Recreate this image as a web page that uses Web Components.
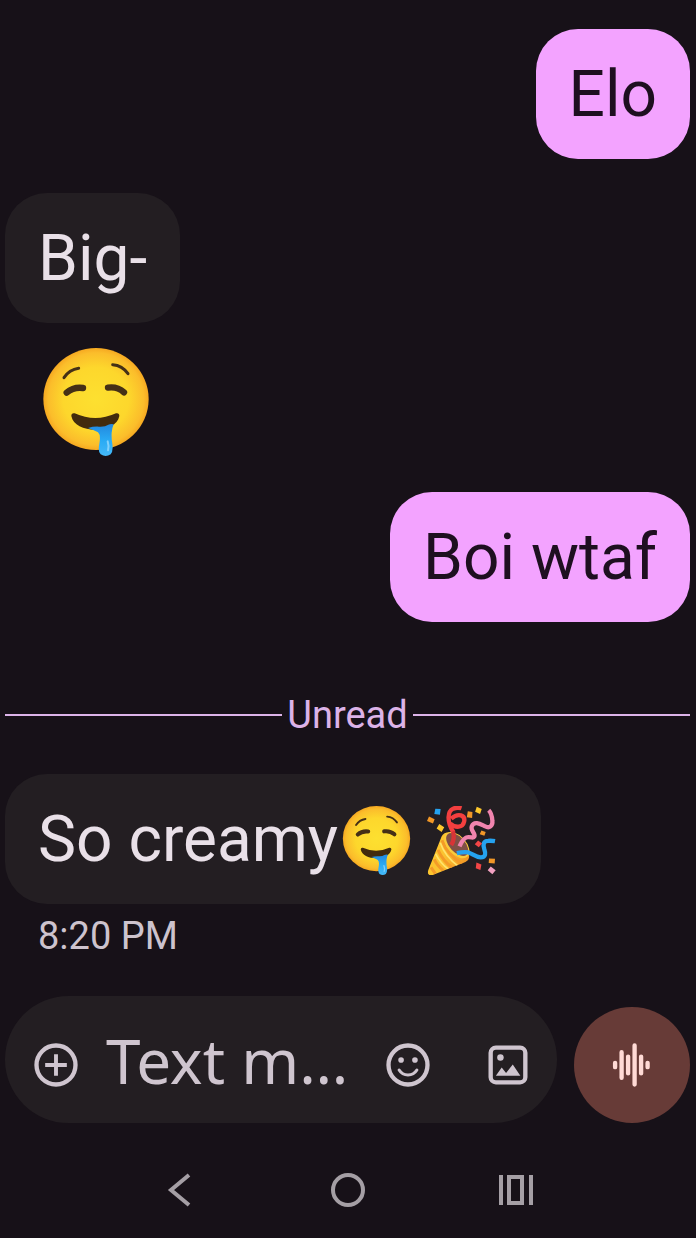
<!DOCTYPE html>
<html lang="en">
<head>
<meta charset="utf-8">
<meta name="viewport" content="width=device-width, initial-scale=1">
<title>Messages</title>
<style>
	html {
		background: #171118;
	}

	body {
		margin: 0;
		font-family: Roboto, "Liberation Sans", sans-serif;
	}
</style>
</head>
<body>
<chat-screen>
	<chat-message sent>Elo</chat-message>
	<chat-message>Big-</chat-message>
	<chat-message bare><chat-emoji name="drool"></chat-emoji></chat-message>
	<chat-message sent>Boi wtaf</chat-message>
	<chat-divider>Unread</chat-divider>
	<chat-message time="8:20 PM">So creamy<chat-emoji name="drool"></chat-emoji><chat-emoji name="party"></chat-emoji></chat-message>
	<chat-composer slot="footer"></chat-composer>
	<system-nav slot="footer"></system-nav>
</chat-screen>

<script>
/**
 * Dummy HTML tag function for syntax highlighters.
 * @returns {string} The original raw string.
 */
const html = x => x.raw[0];

/**
 * @param {string} name
 * @param {string} markup
 * @param {(shadow: ShadowRoot, host: HTMLElement) => void} [setup]
 */
function define(name, markup, setup) {
	const template = document.createElement("template");
	template.innerHTML = markup;

	customElements.define(name, class extends HTMLElement {
		constructor() {
			super();
			const shadow = this.attachShadow({mode: "open"});
			shadow.appendChild(template.content.cloneNode(true));
			if (setup)
				setup(shadow, this);
		}
	});
}

define("chat-screen", html`
	<style>
		:host {
			display: flex;
			flex-direction: column;
			min-height: 100vh;
			box-sizing: border-box;
			padding: 29px 6px 0 5px;
		}

		main {
			display: flex;
			flex-direction: column;
			flex: 1;
			gap: 34px;
		}
	</style>
	<main><slot></slot></main>
	<footer><slot name="footer"></slot></footer>
`);

define("chat-message", html`
	<style>
		:host {
			display: flex;
			flex-direction: column;
			align-items: flex-start;
		}

		:host([sent]) {
			align-items: flex-end;
		}

		.bubble {
			display: flex;
			align-items: center;
			padding: 26px 33px 24px;
			border-radius: 42px;
			background: #231e22;
			color: #e9e0e8;
			font-size: 64px;
			line-height: 80px;
		}

		:host([sent]) .bubble {
			background: #f3a3ff;
			color: #1e0f20;
		}

		:host([bare]) .bubble {
			--emoji-size: 108px;
			background: none;
			padding-block: 0 2px;
		}

		:host([bare]) {
			margin-top: -9px;
		}

		time {
			padding: 9px 33px 0;
			color: #cdc3cd;
			font-size: 38px;
			line-height: 46px;
		}
	</style>
	<div class="bubble"><slot></slot></div>
`, (shadow, host) => {
	if (!host.hasAttribute("time"))
		return;

	const time = document.createElement("time");
	time.textContent = host.getAttribute("time");
	shadow.appendChild(time);
});

define("chat-divider", html`
	<style>
		:host {
			display: flex;
			align-items: center;
			gap: 5px;
			padding-top: 34px;
			color: #dcb3e8;
			font-size: 38px;
			line-height: 50px;
		}

		:host::before,
		:host::after {
			content: "";
			flex: 1;
			height: 2px;
			background: currentColor;
		}
	</style>
	<slot></slot>
`);

const emoji = {
	drool: html`
		<svg viewBox="125 504 324 324" role="img" aria-label="Drooling face">
			<defs>
				<radialGradient id="skin" cx=".5" cy=".5" r=".52">
					<stop offset="0" stop-color="#fde030"/>
					<stop offset=".6" stop-color="#fdd72c"/>
					<stop offset=".87" stop-color="#fbbd2b"/>
					<stop offset="1" stop-color="#f4a01d"/>
				</radialGradient>
				<linearGradient id="drop" x2="0" y2="1">
					<stop offset="0" stop-color="#2388dd"/>
					<stop offset=".5" stop-color="#29aaf4"/>
					<stop offset="1" stop-color="#45b9f8"/>
				</linearGradient>
			</defs>
			<ellipse cx="287" cy="657" rx="158" ry="153" fill="url(#skin)"/>
			<g fill="none" stroke="#453016" stroke-linecap="round">
				<path d="M191 593q16-24 44-28M337 554q29 2 46 27" stroke-width="9"/>
				<path d="M199 638q21-18 49-14M323 623q28-4 48 14" stroke-width="19"/>
			</g>
			<path d="M213 708q0-10 10-8 62 28 124 0 10-2 10 8c-5 27-37 41-72 41s-67-14-72-41z" fill="#422b0d"/>
			<path d="M263 744q17-5 33-4 19 1 28-6 8-3 16-1-5 12-6 25-1 18 2 34 3 22-5 31-15 10-30 0-9-8-4-32 5-26-4-34-14-8-30-13z" fill="url(#drop)"/>
			<path d="M322 784q5 15 1 27" fill="none" stroke="#83d1fb" stroke-width="6" stroke-linecap="round"/>
		</svg>
	`,
	party: html`
		<svg viewBox="293 73 208 208" role="img" aria-label="Party popper">
			<defs>
				<linearGradient id="cone" x2="1" y2=".35">
					<stop offset="0" stop-color="#ffc928"/>
					<stop offset=".5" stop-color="#fbc331"/>
					<stop offset="1" stop-color="#f19725"/>
				</linearGradient>
				<clipPath id="cone-edge">
					<path d="M297 278q-3-3 0-12l40-101q6-14 27-13 60 26 56 76-1 9-11 14l-93 37q-15 6-19-1z"/>
				</clipPath>
			</defs>
			<g clip-path="url(#cone-edge)">
				<path d="M290 140h140v150h-140z" fill="url(#cone)"/>
				<path d="M338 176q14 42 63 72M326 205q15 34 44 54M315 234q9 20 27 33M305 258l13 19" fill="none" stroke="#f49b27" stroke-width="9"/>
				<path d="M333 184q14 42 56 72M319 217q15 29 38 46" fill="none" stroke="#ffe36c" stroke-width="5"/>
			</g>
			<ellipse cx="383" cy="191" rx="28" ry="47" fill="#f9cb3b" transform="rotate(-43 383 191)"/>
			<ellipse cx="384" cy="189" rx="23" ry="42" fill="#805046" transform="rotate(-43 384 189)"/>
			<g fill="none" stroke-width="13" stroke-linejoin="round">
				<path d="M366 191q12-18 5-45" stroke="#d83436"/>
				<path d="M371 150c-19-33-16-61 1-69 10-4 19-3 25-1M366 111c22-19 43-10 39 9-4 18-25 21-42 6" stroke="#f33f3f"/>
				<path d="M391 195c8-18 15-28 25-28 12-1 17 5 20-2 4-9-13-18-8-31 7-18 27-6 40 0 13 8 24-1 22-17-1-13-4-24-11-31" stroke="#f084ae"/>
				<path d="M383 215q22-5 35-2c13 4 21 14 37 15 16 0 15-13 11-24-5-15-3-26 11-26q10-1 21 1" stroke="#25a2ef"/>
			</g>
			<path d="M318 81l16 1-2 17-17-2z" fill="#25a2ef"/>
			<path d="M299 105l17 8-5 13-18-8zM416 89l14 2-1 18-16-2zM457 147l13 4-4 12-14-5zM480 231l18 1-1 14-18-1z" fill="#f19727"/>
			<path d="M330 127l15 10-8 14-15-10zM443 75l15 7-5 15-15-7z" fill="#fdc72c"/>
			<path d="M447 177l12 9-10 11-12-9zM442 243l15 6-3 17-14-5z" fill="#f34546"/>
			<path d="M485 255l15 12-10 12-14-12z" fill="#f2a1c1"/>
		</svg>
	`,
};

define("chat-emoji", html`
	<style>
		:host {
			display: flex;
			margin: 0 12px 0 4px;
		}

		svg {
			width: var(--emoji-size, 69px);
			height: var(--emoji-size, 69px);
		}
	</style>
`, (shadow, host) => {
	shadow.innerHTML += emoji[host.getAttribute("name")];
});

define("chat-composer", html`
	<style>
		:host {
			display: flex;
			align-items: flex-end;
			gap: 17px;
			color: #cfc5cf;
		}

		.field {
			display: flex;
			align-items: center;
			flex: 1;
			min-width: 0;
			box-sizing: border-box;
			height: 127px;
			padding: 10px 23px 0 25px;
			border-radius: 64px;
			background: #231e22;
		}

		input {
			flex: 1;
			min-width: 0;
			height: 84px;
			margin: 0 24px;
			padding: 0 0 10px;
			border: 0;
			outline: 0;
			background: none;
			color: inherit;
			font: 62px "Noto Sans", "Open Sans", sans-serif;
			text-overflow: ellipsis;
		}

		input::placeholder {
			color: inherit;
			opacity: 1;
		}

		button {
			display: flex;
			padding: 0;
			border: 0;
			background: none;
			color: inherit;
		}

		svg {
			width: 52px;
			height: 52px;
			fill: none;
			stroke: currentColor;
			stroke-width: 2;
		}

		.gallery {
			margin-left: 48px;
		}

		.voice {
			align-items: center;
			justify-content: center;
			width: 116px;
			height: 116px;
			border-radius: 50%;
			background: #673b37;
			color: #ffdad5;
		}
	</style>
	<div class="field">
		<button aria-label="Add attachment">
			<svg viewBox="0 0 24 24"><circle cx="12" cy="12" r="9"/><path d="M12 7v10M7 12h10" stroke-width="1.8"/></svg>
		</button>
		<input type="text" aria-label="Text message" placeholder="Text m…">
		<button aria-label="Emoji">
			<svg viewBox="0 0 24 24">
				<circle cx="12" cy="12" r="9"/>
				<g fill="currentColor" stroke="none"><circle cx="8.8" cy="9.7" r="1.3"/><circle cx="15.2" cy="9.7" r="1.3"/></g>
				<path d="M7.9 14.3q1.4 2.3 4.1 2.3t4.1-2.3" stroke-width="1.4" stroke-linecap="round"/>
			</svg>
		</button>
		<button class="gallery" aria-label="Gallery">
			<svg viewBox="0 0 24 24">
				<rect x="4" y="4" width="16" height="16" rx="2.4"/>
				<g fill="currentColor" stroke="none"><circle cx="8.5" cy="8.5" r="1.5"/><path d="M6.4 17l2.7-3.8 2 2.5 3.1-3.9L17.7 17z"/></g>
			</svg>
		</button>
	</div>
	<button class="voice" aria-label="Record voice message">
		<svg viewBox="0 0 24 24"><path d="M4.2 11v2M7.2 6.1v11.8M10.2 8.1v7.8M13.2 3v18M16.2 8.1v7.8M19.2 11v2" stroke-linecap="round"/></svg>
	</button>
`);

define("system-nav", html`
	<style>
		:host {
			display: grid;
			grid-template-columns: repeat(3, 168px);
			justify-content: center;
			padding: 43px 0 24px;
			color: #a59fa5;
		}

		button {
			display: flex;
			justify-content: center;
			padding: 0;
			border: 0;
			background: none;
			color: inherit;
		}

		svg {
			width: 48px;
			height: 48px;
			fill: none;
			stroke: currentColor;
			stroke-width: 4;
		}
	</style>
	<button aria-label="Back"><svg viewBox="0 0 48 48"><path d="M33 9L15 24l18 15"/></svg></button>
	<button aria-label="Home"><svg viewBox="0 0 48 48"><circle cx="24" cy="24" r="15"/></svg></button>
	<button aria-label="Recent apps"><svg viewBox="0 0 48 48"><path d="M9 9v30M39 9v30M17 11h13v26H17z"/></svg></button>
`);
</script>
</body>
</html>
